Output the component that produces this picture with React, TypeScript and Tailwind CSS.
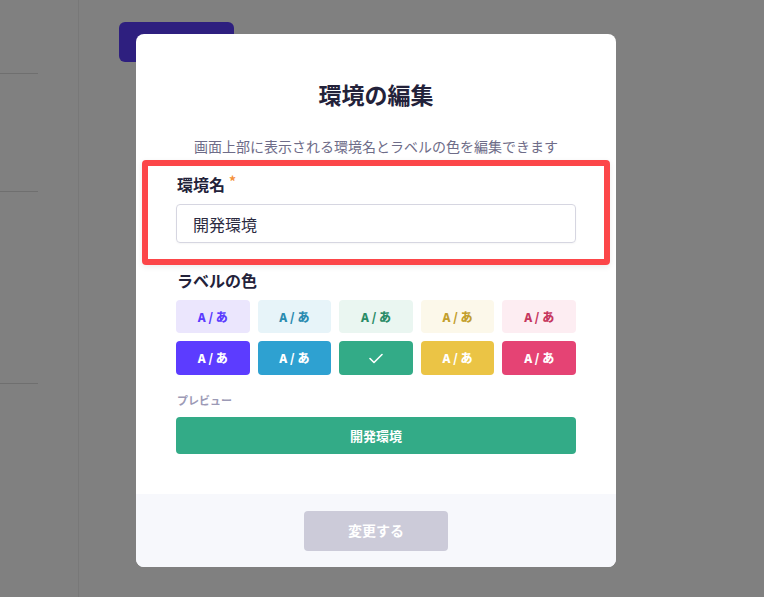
import React from "react";

const font = { fontFamily: '"Noto Sans CJK JP", "Noto Sans", sans-serif' };

const light = [
  { bg: "bg-[#ebe6fd]", fg: "text-[#5c3cff]" },
  { bg: "bg-[#e7f4f9]", fg: "text-[#2a8bb0]" },
  { bg: "bg-[#eaf6f1]", fg: "text-[#2a8c68]" },
  { bg: "bg-[#fcf8ea]", fg: "text-[#c39f2c]" },
  { bg: "bg-[#fdedf2]", fg: "text-[#c6375f]" },
];
const solid = ["bg-[#5c3cff]", "bg-[#2ea1d1]", "bg-[#33ab87]", "bg-[#ebc445]", "bg-[#e54374]"];

export default function App() {
  return (
    <div className="relative w-[764px] h-[597px] overflow-hidden bg-[#808080]" style={font}>
      {/* underlying page (dimmed) */}
      <div className="flex h-full">
        <div className="w-[79px] h-full border-r border-[#787878] flex flex-col">
          <div className="h-[74px] w-[38px] border-b border-[#6f6f6f]" />
          <div className="h-[118px] w-[38px] border-b border-[#6f6f6f]" />
          <div className="h-[192px] w-[38px] border-b border-[#6f6f6f]" />
        </div>
        <div className="pl-[40px] pt-[22px]">
          <div className="w-[115px] h-[40px] rounded-[6px] bg-[#2e1f7f]" />
        </div>
      </div>

      {/* modal */}
      <div className="absolute left-[136px] top-[34px] w-[480px] h-[533px] bg-white rounded-[8px] overflow-hidden flex flex-col">
        <div className="flex-1 px-[40px] pt-[44px]">
          <h2 className="text-center text-[23px] leading-[32px] font-bold text-[#23223a]">環境の編集</h2>
          <p className="mt-[26px] text-center text-[14px] leading-[20px] text-[#6e6c88]">
            画面上部に表示される環境名とラベルの色を編集できます
          </p>
          <div className="mt-[17px] flex items-start text-[16px] leading-[22px] font-bold text-[#23223a]">
            <span className="pl-[1px]">環境名</span>
            <span className="ml-[4px] text-[14px] leading-[16px] text-[#f5913a]">*</span>
          </div>
          <div className="mt-[9px] h-[39px] rounded-[4px] border border-[#d6d6e1] flex items-center pl-[16px] text-[16px] text-[#2b2a3f] shadow-[0_1px_2px_rgba(0,0,0,0.04)]">
            開発環境
          </div>
          <div className="mt-[26px] text-[16px] leading-[22px] font-bold text-[#23223a] pl-[1px]">ラベルの色</div>
          <div className="mt-[9px] grid grid-cols-5 gap-x-[8px] gap-y-[8px]">
            {light.map((c, i) => (
              <div key={i} className={`h-[33px] rounded-[4px] flex items-center justify-center text-[12px] font-extrabold ${c.bg} ${c.fg}`}>
                A / あ
              </div>
            ))}
            {solid.map((c, i) => (
              <div key={i} className={`h-[34px] rounded-[4px] flex items-center justify-center text-[12px] font-extrabold text-white ${c}`}>
                {i === 2 ? (
                  <svg width="14" height="11" viewBox="0 0 14 11" fill="none">
                    <path d="M1 5.5 L5 9.5 L13 1.5" stroke="white" strokeWidth="1.6" strokeLinecap="round" strokeLinejoin="round" />
                  </svg>
                ) : (
                  "A / あ"
                )}
              </div>
            ))}
          </div>
          <div className="mt-[17px] text-[11px] leading-[16px] font-bold text-[#9c9ab6] pl-[1px]">プレビュー</div>
          <div className="mt-[9px] h-[37px] rounded-[4px] bg-[#33ab87] flex items-center justify-center text-[13px] font-bold text-white">
            開発環境
          </div>
        </div>
        <div className="h-[73px] bg-[#f7f8fc] flex items-center justify-center">
          <div className="w-[144px] h-[40px] rounded-[4px] bg-[#cccbd9] flex items-center justify-center text-[14px] font-bold text-white">
            変更する
          </div>
        </div>
        {/* red annotation box */}
        <div className="absolute left-[6px] top-[126px] w-[468px] h-[105px] border-[6px] border-[#fc4649] rounded-[4px] shadow-[0_2px_6px_rgba(0,0,0,0.08)]" />
      </div>
    </div>
  );
}
